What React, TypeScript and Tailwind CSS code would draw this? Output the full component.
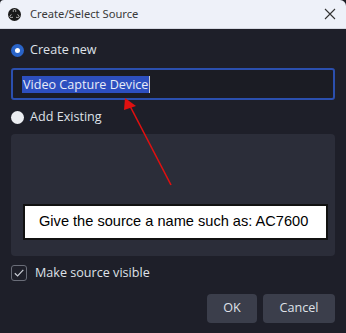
import React from "react";

export default function App() {
  return (
    <div className="w-[346px] h-[333px] bg-[#1b1c22] overflow-hidden relative">
      <div className="w-full h-full rounded-tr-[6px] rounded-tl-[4px] overflow-hidden flex flex-col bg-[#1e1f29]">
        {/* Title bar */}
        <div className="h-[29px] shrink-0 bg-[#eef1f9] flex items-center px-[8px] border-b border-[#d5d8e2]" style={{ fontFamily: '"Noto Sans", sans-serif' }}>
          <svg width="13" height="13" viewBox="0 0 24 24" className="shrink-0">
            <circle cx="12" cy="12" r="12" fill="#1a1a1a" />
            <circle cx="12" cy="5.6" r="3.3" fill="#ffffff" />
            <circle cx="6.5" cy="15.2" r="3.3" fill="#ffffff" />
            <circle cx="17.5" cy="15.2" r="3.3" fill="#ffffff" />
            <circle cx="12" cy="12" r="5" fill="#1a1a1a" />
            <circle cx="12" cy="5.6" r="2.2" fill="#1a1a1a" />
            <circle cx="6.5" cy="15.2" r="2.2" fill="#1a1a1a" />
            <circle cx="17.5" cy="15.2" r="2.2" fill="#1a1a1a" />
          </svg>
          <span className="ml-[9px] text-[11.2px] text-[#3a3a3a] leading-none">Create/Select Source</span>
          <div className="flex-1" />
          <svg width="12" height="12" viewBox="0 0 12 12" className="mr-[2px]">
            <path d="M1 1 L11 11 M11 1 L1 11" stroke="#333" strokeWidth="1.1" />
          </svg>
        </div>

        {/* Body */}
        <div className="flex-1 flex flex-col px-[11px] text-[12.6px] text-[#dfe1e8]" style={{ fontFamily: '"Open Sans", sans-serif' }}>
          <div className="flex items-center h-[18px] mt-[12px]">
            <div className="w-[13px] h-[13px] rounded-full bg-[#2a64c8] flex items-center justify-center">
              <div className="w-[5px] h-[5px] rounded-full bg-white" />
            </div>
            <span className="ml-[6px]">Create new</span>
          </div>

          <div className="mt-[9px] h-[32px] rounded-[3px] border-2 border-[#2b4fae] bg-[#1b1c24] flex items-center pl-[9px]">
            <span className="bg-[#2d4fbf] text-[#e8ecf8] leading-[17px] px-[1px]">Video Capture Device</span>
            <span className="w-[1px] h-[17px] bg-[#ccc]" />
          </div>

          <div className="flex items-center h-[18px] mt-[8px]">
            <div className="w-[13px] h-[13px] rounded-full bg-[#eceef2]" />
            <span className="ml-[6px]">Add Existing</span>
          </div>

          <div className="mt-[8px] h-[122px] rounded-[4px] bg-[#2b2d39] flex flex-col pt-[70px] pl-[12px] pr-[7px]">
            <div className="h-[36px] bg-white border-2 border-[#111] flex items-center pl-[14px] text-black text-[14.6px]" style={{ fontFamily: '"Liberation Sans", Arial, sans-serif' }}>
              Give the source a name such as: AC7600
            </div>
          </div>

          <div className="flex items-center mt-[9px] h-[16px]">
            <div className="w-[16px] h-[16px] rounded-[3px] border border-[#6a6d78] flex items-center justify-center">
              <svg width="12" height="12" viewBox="0 0 12 12">
                <path d="M1.8 6.3 L4.6 9 L10.3 2.8" stroke="#c9ccd4" strokeWidth="1.2" fill="none" />
              </svg>
            </div>
            <span className="ml-[8px]">Make source visible</span>
          </div>

          <div className="flex justify-end gap-[6px] mt-[13px]">
            <div className="w-[50px] h-[29px] rounded-[4px] bg-[#3b3e4b] flex items-center justify-center">OK</div>
            <div className="w-[72px] h-[29px] rounded-[4px] bg-[#3b3e4b] flex items-center justify-center">Cancel</div>
          </div>
        </div>
      </div>

      {/* Red annotation arrow */}
      <svg className="absolute left-0 top-0 pointer-events-none" width="346" height="333" viewBox="0 0 346 333">
        <line x1="171" y1="185" x2="130" y2="106" stroke="#e01010" strokeWidth="1.6" />
        <polygon points="125,98 136,106 124,110" fill="#e01010" />
      </svg>
    </div>
  );
}
